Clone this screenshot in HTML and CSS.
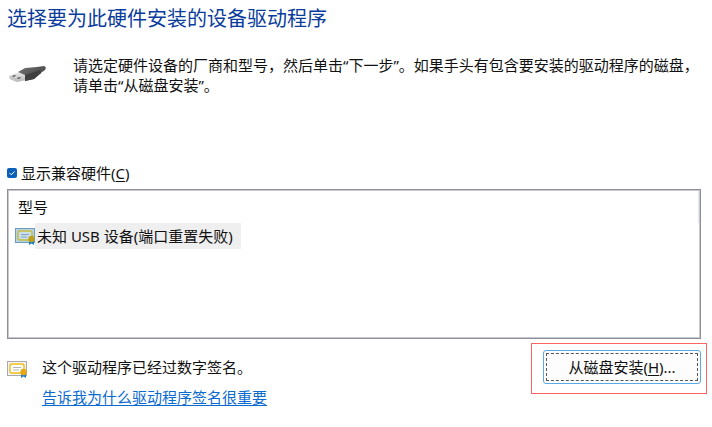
FILE: index.html
```html
<!DOCTYPE html>
<html lang="zh-CN">
<head>
    <meta charset="UTF-8">
    <meta name="viewport" content="width=device-width, initial-scale=1.0">
    <title>选择要为此硬件安装的设备驱动程序</title>
    <link rel="stylesheet" href="styles.css">
</head>
<body>
    <main class="wizard">
        <h1 class="title">选择要为此硬件安装的设备驱动程序</h1>

        <div class="intro">
            <svg class="usb-icon" width="40" height="24" viewBox="0 0 40 24" aria-hidden="true">
                <defs>
                    <linearGradient id="metal" x1="0" y1="0" x2="0" y2="1">
                        <stop offset="0" stop-color="#ececec"/>
                        <stop offset="1" stop-color="#b4b4b4"/>
                    </linearGradient>
                    <linearGradient id="body" x1="0" y1="0" x2="1" y2="1">
                        <stop offset="0" stop-color="#777"/>
                        <stop offset="1" stop-color="#383838"/>
                    </linearGradient>
                </defs>
                <path d="M30 4 L37 3 Q40 4 38 7 L31 12 Z" fill="#555"/>
                <path d="M2 13 L12 9 L20 12 L19 17 L10 19 L3 16 Z" fill="url(#metal)"/>
                <path d="M2 13 L10 16 L10 19 L3 16 Z" fill="#c4c4c4"/>
                <path d="M5 13 L8 12 L9 13 L6 14 Z M10 15 L13 14 L14 15 L11 16 Z" fill="#555"/>
                <path d="M11 9 L18 5 L30 4 L34 6 L34 10 L27 16 L18 18 L18 12 Z" fill="url(#body)"/>
                <path d="M18 12 L33 7 L34 10 L27 16 L18 18 Z" fill="#404040"/>
            </svg>
            <p class="intro-text">请选定硬件设备的厂商和型号，然后单击“下一步”。如果手头有包含要安装的驱动程序的磁盘，请单击“从磁盘安装”。</p>
        </div>

        <label class="compatible">
            <input type="checkbox" class="checkbox" checked>
            <span>显示兼容硬件(<u>C</u>)</span>
        </label>

        <div class="list">
            <table class="models">
                <thead>
                    <tr><th>型号</th></tr>
                </thead>
                <tbody>
                    <tr>
                        <td>
                            <div class="model">
                                <svg class="model-icon" width="20" height="18" viewBox="0 0 20 18" aria-hidden="true">
                                    <rect x="0.5" y="1.5" width="19" height="14" fill="#b5d2e6" stroke="#6f9bbd"/>
                                    <rect x="3" y="4" width="14" height="9" rx="2" fill="#c9deeb" stroke="#c9bd3c" stroke-width="1.5"/>
                                    <path d="M6 7.5 H14 M6 10 H12" stroke="#83a9c6"/>
                                    <path d="M14 13 H19 V18 L16.5 16.5 L14 18 Z" fill="#217fc4"/>
                                    <circle cx="16.5" cy="12" r="3.2" fill="#b9a11e"/>
                                </svg>
                                <span class="model-name">未知 USB 设备(端口重置失败)</span>
                            </div>
                        </td>
                    </tr>
                </tbody>
            </table>
        </div>

        <div class="footer">
            <svg class="signed-icon" width="20" height="18" viewBox="0 0 20 18" aria-hidden="true">
                <rect x="0.5" y="1.5" width="19" height="14" fill="#f4f4f4" stroke="#a9a9a9"/>
                <rect x="3" y="4" width="14" height="9" rx="2" fill="#fff" stroke="#f2bd19" stroke-width="1.5"/>
                <path d="M6 7.5 H14 M6 10 H12" stroke="#b5b5b5"/>
                <path d="M14 13 H19 V18 L16.5 16.5 L14 18 Z" fill="#2a7fc4"/>
                <circle cx="16.5" cy="12" r="3.2" fill="#e6a817"/>
            </svg>
            <div class="signature">
                <p>这个驱动程序已经过数字签名。</p>
                <a href="#">告诉我为什么驱动程序签名很重要</a>
            </div>
            <div class="highlight">
                <button type="button" class="disk-button"><span>从磁盘安装(<u>H</u>)...</span></button>
            </div>
        </div>
    </main>
</body>
</html>
```
FILE: styles.css
```css
* {
    box-sizing: border-box;
}

body {
    margin: 0;
    background: #fff;
    color: #111;
    font-family: "Noto Sans", "Noto Sans CJK SC", sans-serif;
    font-size: 15px;
    line-height: 20px;
}

p {
    margin: 0;
}

u {
    text-underline-offset: 2px;
}

.wizard {
    padding: 7px 5px 16px 7px;
}

.title {
    margin: 0;
    color: #0a3c9c;
    font-size: 20px;
    font-weight: normal;
    line-height: 24px;
}

.intro {
    display: flex;
    gap: 26px;
    min-height: 108px;
    margin-top: 24px;
}

.usb-icon {
    flex: none;
    margin-top: 8px;
}

.intro-text {
    flex: 1;
}

.compatible {
    display: flex;
    align-items: center;
    gap: 4px;
    width: fit-content;
}

.checkbox {
    appearance: none;
    width: 10px;
    height: 10px;
    margin: 0;
    border-radius: 2px;
    background: #0a5fb8 url("data:image/svg+xml,%3Csvg xmlns='http://www.w3.org/2000/svg' viewBox='0 0 10 10'%3E%3Cpath d='M2.5 5 L4.3 6.8 L7.5 3.5' fill='none' stroke='white'/%3E%3C/svg%3E");
}

.list {
    min-height: 150px;
    margin: 6px 6px 0 0;
    padding: 1px 1px 6px 7px;
    border: 1px solid #8e8f98;
    outline: 1px solid #c8c9d0;
    outline-offset: -2px;
}

.models {
    width: 100%;
    border-collapse: collapse;
}

.models th {
    padding: 6px 3px;
    border-right: 1px solid #e8ebeb;
    font-weight: normal;
    text-align: left;
}

.models td {
    padding: 0;
}

.model {
    display: flex;
    align-items: center;
}

.model-name {
    padding: 3px 8px 3px 2px;
    background: #efefef;
}

.footer {
    display: flex;
    align-items: flex-start;
    margin-top: 4px;
}

.signed-icon {
    flex: none;
    margin-top: 17px;
}

.signature {
    flex: 1;
    padding: 14px 0 0 15px;
}

.signature a {
    display: inline-block;
    margin-top: 10px;
    color: #0a6ad0;
    text-underline-offset: 2px;
}

.highlight {
    padding: 6px 5px 9px 11px;
    border: 1px solid #ff6464;
}

.disk-button {
    display: block;
    width: 158px;
    padding: 2px;
    border: 1px solid #5aa9e6;
    border-radius: 3px;
    background: #fdfdfd;
    color: inherit;
    font: inherit;
}

.disk-button span {
    display: block;
    padding: 3px;
    border: 1px dashed #555;
}
```
